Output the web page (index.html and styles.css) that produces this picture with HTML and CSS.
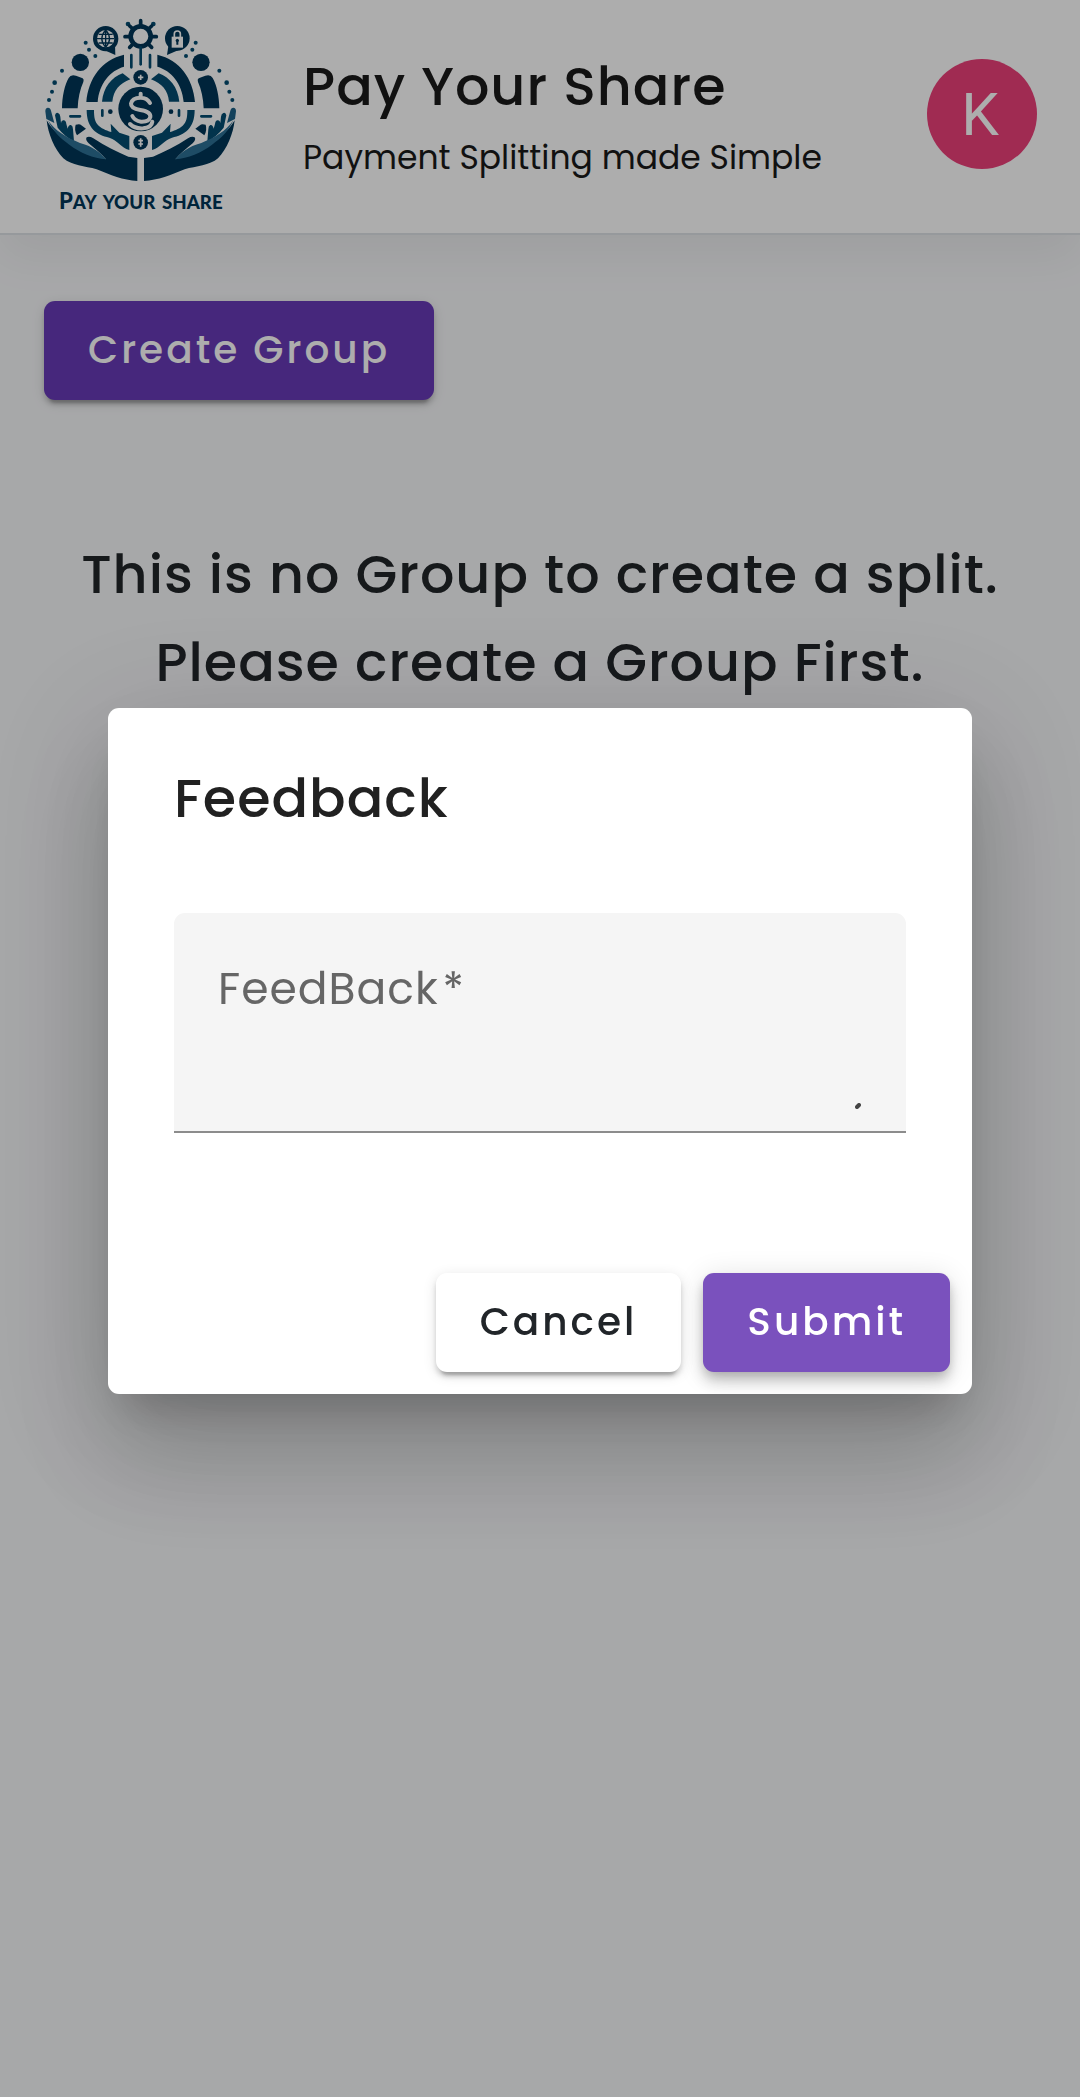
FILE: index.html
```html
<!DOCTYPE html>
<html lang="en">
<head>
<meta charset="utf-8">
<meta name="viewport" content="width=device-width, initial-scale=1">
<title>Pay Your Share</title>
<link rel="stylesheet" href="styles.css">
</head>
<body>
<header class="header">
  <svg class="logo" viewBox="42 42 576 600" role="img" aria-label="Pay Your Share">
    <defs>
      <g id="half">
        <circle cx="151" cy="187" r="26" fill="#003657"/>
        <path fill="#003657" d="M96 325C96 290 104 255 116 234Q122 222 138 227L158 235Q163 239 160 246C150 268 144 295 143 325Z"/>
        <path fill="#003657" d="M169 306C175 235 215 180 282 164V200C240 212 208 250 203 306Z"/>
        <path fill="#034c71" d="M216 305C220 262 245 232 278 220L301 238C268 250 250 272 247 305Z"/>
        <path fill="#034c71" d="M170 330H192C192 352 194 366 206 377C218 388 235 393 244 396L242 371L268 398L298 408V450C272 443 264 421 238 413C200 405 170 385 170 330Z"/>
        <path fill="none" stroke="#034c71" stroke-width="8" stroke-linecap="round" d="M304 165V202M217 331V347M121 349H150"/>
        <circle cx="241" cy="335" r="7" fill="#003657"/>
        <path fill="#003657" d="M137 374Q150 370 154 376L168 386L141 406Q132 390 137 374Z"/>
        <path fill="#1c6186" d="M46 334Q46 323 54 323Q61 323 63 332L73 369L49 357Z"/>
        <path fill="#034c71" d="M75 346Q77 336 84 339Q90 341 91 350L93 369Q94 360 101 361Q108 362 109 372L113 386Q116 373 123 375Q129 378 129 388L132 424Q104 410 83 383Z"/>
        <path fill="#003657" d="M50 361C65 388 95 415 130 436C165 452 200 467 228 478C215 462 195 446 176 430Q165 419 170 412Q178 408 190 415C225 438 260 456 295 470L322 474V543C280 541 240 525 200 508C165 498 125 497 100 475C73 448 54 400 50 361Z"/>
        <path fill="#2d7096" d="M54 361C75 393 110 413 150 429C190 440 210 457 228 478C190 475 150 458 118 434C90 415 66 390 54 361Z"/>
        <g fill="#034c71"><circle cx="294" cy="72" r="7"/><circle cx="167" cy="128" r="6"/><circle cx="177" cy="149" r="6"/><circle cx="196" cy="168" r="6"/><circle cx="96" cy="212" r="6"/><circle cx="74" cy="248" r="7"/><circle cx="66" cy="275" r="6"/><circle cx="57" cy="300" r="6"/></g>
      </g>
    </defs>
    <use href="#half"/>
    <use href="#half" transform="translate(664 0) scale(-1 1)"/>
    <g fill="#003657">
      <circle cx="227" cy="116" r="38"/><path d="M222 150L256 165L255 135Z"/>
      <circle cx="442" cy="115" r="37"/><path d="M446 150L411 165L416 132Z"/>
    </g>
    <circle cx="227" cy="116" r="26" fill="#fff"/>
    <path fill="none" stroke="#003657" stroke-width="4" d="M227 90V142M201 116H253M206 103H248M206 129H248M227 90Q204 116 227 142M227 90Q250 116 227 142"/>
    <path fill="none" stroke="#fff" stroke-width="5" d="M433 112V101Q433 93 442 93Q451 93 451 101V112"/>
    <path fill="#fff" d="M425 110H459V143H425Z"/>
    <path fill="#003657" d="M439 134V126A5 5 0 1 1 445 126V134Z"/>
    <path stroke="#003657" stroke-width="11" stroke-linecap="round" d="M332 62V78M285 110H300M379 110H364M299 78L309 87M365 78L355 87M299 142L309 132M365 142L355 132"/>
    <circle cx="332" cy="109" r="30" fill="none" stroke="#003657" stroke-width="14"/>
    <path stroke="#034c71" stroke-width="8" stroke-linecap="round" d="M332 142V193"/>
    <g fill="#003657"><circle cx="332" cy="232" r="22"/><circle cx="332" cy="327" r="67"/><circle cx="332" cy="427" r="22"/></g>
    <path stroke="#fff" stroke-width="5" d="M332 224V240M324 232H340M332 415V440M325 422H339M325 432H339"/>
    <path fill="none" stroke="#fff" stroke-width="12" stroke-linecap="round" d="M332 281V292M360 309Q351 293 332 293Q306 293 303 311Q302 325 331 330Q363 335 361 351Q357 366 333 365Q314 363 307 348M300 372Q315 387 340 385Q365 382 367 365"/>
    <text class="logo-text" y="628"><tspan class="logo-initial" x="87">P</tspan><tspan>AY</tspan><tspan x="218">YOUR</tspan><tspan x="396">SHARE</tspan></text>
  </svg>
  <div class="brand">
    <h1 class="brand-title">Pay Your Share</h1>
    <p class="brand-tagline">Payment Splitting made Simple</p>
  </div>
  <button class="avatar" type="button" aria-label="Account">K</button>
</header>
<main class="content">
  <button class="button button-primary" type="button">Create Group</button>
  <p class="empty">This is no Group to create a split. Please create a Group First.</p>
</main>
<div class="backdrop">
  <form class="dialog" role="dialog" aria-modal="true" aria-labelledby="dialog-title">
    <h2 class="dialog-title" id="dialog-title">Feedback</h2>
    <div class="field">
      <textarea class="field-input" id="feedback" required></textarea>
      <label class="field-label" for="feedback">FeedBack<span class="field-required">*</span></label>
      <svg class="field-grip" viewBox="0 0 6 6" aria-hidden="true"><path d="M2 4L4 2" stroke="#444" stroke-width="4" stroke-linecap="round"/></svg>
    </div>
    <div class="actions">
      <button class="button button-plain" type="button">Cancel</button>
      <button class="button button-submit" type="submit">Submit</button>
    </div>
  </form>
</div>
</body>
</html>
```

FILE: styles.css
```css
* {
  box-sizing: border-box;
}

body {
  margin: 0;
  min-height: 100vh;
  background: #f7f8fa;
  color: #212529;
  font-family: Poppins, Inter, sans-serif;
}

h1,
h2,
p {
  margin: 0;
  font-weight: 500;
}

.header {
  display: flex;
  align-items: center;
  padding: 14px 43px 19px 44px;
  background: #fff;
  border-bottom: 2px solid #dee2e6;
  box-shadow: 0 22px 44px rgba(0, 0, 0, .06);
}

.logo {
  flex: none;
  width: 192px;
  height: 200px;
}

.logo-text {
  fill: #003657;
  font: 900 56px Lato, sans-serif;
}

.logo-initial {
  font-size: 66px;
}

.brand {
  flex: 1;
  padding: 0 0 2px 67px;
  color: #1a1a1a;
}

.brand-title,
.empty,
.dialog-title {
  font-size: 54px;
  line-height: 88px;
  letter-spacing: 1px;
}

.brand-tagline {
  font-size: 33px;
  font-weight: 400;
  line-height: 55px;
}

.avatar {
  width: 110px;
  height: 110px;
  padding: 0 4px 0 0;
  border: 0;
  border-radius: 50%;
  background: #ec407a;
  color: #fff;
  font: 400 60px Roboto, sans-serif;
}

.content {
  padding: 66px 44px;
}

.button {
  height: 99px;
  padding: 0 44px 2px;
  border: 0;
  border-radius: 11px;
  font: 500 39px Poppins, Inter, sans-serif;
  letter-spacing: 3px;
  box-shadow: 0 8px 3px -5px rgba(0, 0, 0, .2), 0 5px 5px rgba(0, 0, 0, .14), 0 3px 14px rgba(0, 0, 0, .12);
}

.button-primary {
  background: #673ab7;
  color: #fff;
}

.button-plain {
  background: #fff;
  color: #212529;
}

.button-submit {
  background: #7a51bd;
  color: #fff;
  box-shadow: 0 5px 11px -3px rgba(0, 0, 0, .2), 0 11px 14px rgba(0, 0, 0, .14), 0 3px 28px rgba(0, 0, 0, .12);
}

.empty {
  margin-top: 130px;
  text-align: center;
}

.backdrop {
  position: fixed;
  inset: 0;
  display: flex;
  align-items: center;
  justify-content: center;
  padding-top: 5px;
  background: rgba(0, 0, 0, .32);
}

.dialog {
  width: 80vw;
  background: #fff;
  border-radius: 11px;
  box-shadow: 0 30px 41px -19px rgba(0, 0, 0, .2), 0 66px 105px 8px rgba(0, 0, 0, .14), 0 25px 127px 22px rgba(0, 0, 0, .12);
}

.dialog-title {
  padding: 46px 66px 71px;
  color: #212121;
}

.field {
  position: relative;
  margin: 0 66px 118px;
}

.field-input {
  display: block;
  width: 100%;
  height: 220px;
  padding: 44px;
  border: 0;
  border-bottom: 2px solid #8c8c8c;
  border-radius: 11px 11px 0 0;
  background: #f5f5f5;
  font: 400 44px/66px Poppins, Inter, sans-serif;
  resize: none;
}

.field-label {
  position: absolute;
  top: 43px;
  left: 44px;
  color: #666;
  font-size: 44px;
  line-height: 66px;
  letter-spacing: 1px;
}

.field-required {
  margin-left: 4px;
}

.field-grip {
  position: absolute;
  right: 45px;
  bottom: 24px;
  width: 6px;
  height: 6px;
}

.actions {
  display: flex;
  justify-content: flex-end;
  gap: 22px;
  padding: 22px;
}
```
